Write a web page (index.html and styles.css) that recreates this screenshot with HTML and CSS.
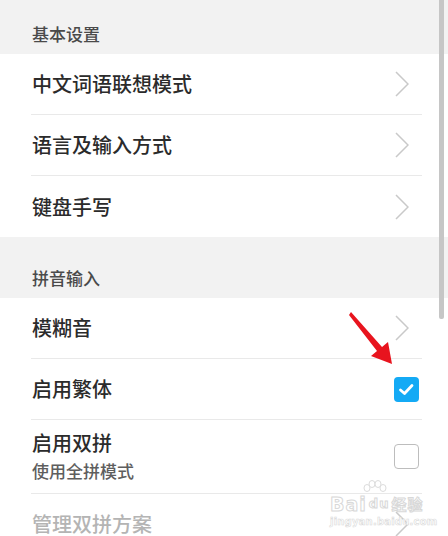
FILE: index.html
```html
<!DOCTYPE html>
<html lang="zh-CN">
<head>
<meta charset="utf-8">
<link rel="stylesheet" href="styles.css">
</head>
<body>
<div class="page">
  <div class="section-head first"><span>基本设置</span></div>
  <div class="row"><div class="row-inner"><span class="label">中文词语联想模式</span><span class="ctrl"><svg class="chev" width="14" height="26" viewBox="0 0 14 26"><path d="M1 1 L13 13 L1 25" fill="none" stroke="#c9c9c9" stroke-width="1.5"/></svg></span></div></div>
  <div class="row"><div class="row-inner"><span class="label">语言及输入方式</span><span class="ctrl"><svg class="chev" width="14" height="26" viewBox="0 0 14 26"><path d="M1 1 L13 13 L1 25" fill="none" stroke="#c9c9c9" stroke-width="1.5"/></svg></span></div></div>
  <div class="row last"><div class="row-inner"><span class="label">键盘手写</span><span class="ctrl"><svg class="chev" width="14" height="26" viewBox="0 0 14 26"><path d="M1 1 L13 13 L1 25" fill="none" stroke="#c9c9c9" stroke-width="1.5"/></svg></span></div></div>
  <div class="section-head"><span>拼音输入</span></div>
  <div class="row"><div class="row-inner"><span class="label">模糊音</span><span class="ctrl"><svg class="chev" width="14" height="26" viewBox="0 0 14 26"><path d="M1 1 L13 13 L1 25" fill="none" stroke="#c9c9c9" stroke-width="1.5"/></svg></span></div></div>
  <div class="row"><div class="row-inner"><span class="label">启用繁体</span><span class="ctrl"><span class="check on"><svg width="25" height="25" viewBox="0 0 25 25"><path d="M6.5 13 L10.5 16.5 L18 8.5" fill="none" stroke="#fff" stroke-width="2.8" stroke-linecap="round" stroke-linejoin="round"/></svg></span></span></div></div>
  <div class="row tall"><div class="row-inner"><span class="texts"><span class="label">启用双拼</span><span class="sub">使用全拼模式</span></span><span class="ctrl"><span class="check"></span></span></div></div>
  <div class="row"><div class="row-inner"><span class="label disabled">管理双拼方案</span><span class="ctrl"><svg class="chev" width="14" height="26" viewBox="0 0 14 26"><path d="M1 1 L13 13 L1 25" fill="none" stroke="#c9c9c9" stroke-width="1.5"/></svg></span></div></div>

  <div class="scrollbar"></div>
  <svg class="arrow" width="448" height="536" viewBox="0 0 448 536"><polygon points="351,312 382,347 388,342 392,364 371,356 377,351 349,315" fill="#e8141e"/></svg>
  <div class="watermark">
    <svg class="paw" width="30" height="20" viewBox="0 0 30 20"><g fill="#fff" stroke="#dcdcdc" stroke-width="1"><ellipse cx="7" cy="8" rx="3" ry="3.5"/><ellipse cx="12" cy="4" rx="3" ry="3.5"/><ellipse cx="18" cy="4" rx="3" ry="3.5"/><ellipse cx="23" cy="8" rx="3" ry="3.5"/></g></svg>
    <div class="wm-top"><span class="wm-bai">Bai</span><span class="wm-du">du</span><span class="wm-jy">经验</span></div>
    <div class="wm-url">jingyan.baidu.com</div>
  </div>
</div>
</body>
</html>
```
FILE: styles.css
```css
* { box-sizing: border-box; }
html, body { margin: 0; padding: 0; }
body {
  width: 448px;
  height: 536px;
  overflow: hidden;
  background: #fff;
  font-family: "Noto Sans CJK SC", "Noto Sans", sans-serif;
}
.page { position: relative; width: 448px; height: 536px; overflow: hidden; }
.section-head {
  height: 61px;
  background: #f2f2f2;
  display: flex;
  align-items: flex-end;
  padding: 0 0 9px 32px;
  font-size: 17px;
  line-height: 22px;
  color: #4a4a4a;
  font-weight: 500;
}
.section-head.first { height: 54px; }
.row { background: #fff; }
.row-inner {
  height: 61px;
  margin-left: 31px;
  margin-right: 26px;
  border-bottom: 1px solid #e9e9e9;
  display: flex;
  align-items: center;
  justify-content: space-between;
  padding-left: 1px;
  padding-right: 3px;
}
.row.last .row-inner { border-bottom: none; }
.row.tall .row-inner { height: 74px; }
.label { font-size: 20px; line-height: 26px; color: #2b2b2b; font-weight: 500; }
.label.disabled { color: #b4b4b4; }
.texts { display: flex; flex-direction: column; }
.texts .label { line-height: 26px; }
.sub { font-size: 17px; line-height: 26px; color: #5e5e5e; margin-top: 2px; font-weight: 500; }
.ctrl { width: 25px; height: 25px; display: flex; align-items: center; }
.chev { display: block; margin-left: 1px; }
.check {
  width: 25px; height: 25px;
  border-radius: 4px;
  border: 1.5px solid #bdbdbd;
  display: block;
}
.check.on { background: #14aaf5; border: none; }
.check svg { display: block; }
.scrollbar {
  position: absolute;
  left: 439px; top: 0;
  width: 5px; height: 319px;
  background: #c6c6c6;
  border-radius: 0 0 2px 2px;
}
.arrow { position: absolute; left: 0; top: 0; }
.watermark {
  position: absolute;
  left: 330px; top: 480px;
  width: 100px;
  color: #fff;
  font-family: "DejaVu Sans", sans-serif;
  font-weight: bold;
}
.paw { position: absolute; left: 30px; top: 0; }
.wm-top { position: absolute; left: 0; top: 14px; display: flex; align-items: center; font-size: 19px; line-height: 20px; -webkit-text-stroke: 1px #d8d8d8; letter-spacing: 1px; }
.wm-du { font-size: 13px; margin: 0 2px; }
.wm-jy { font-family: "Noto Sans CJK SC", sans-serif; font-size: 15px; }
.wm-url { position: absolute; left: 0; top: 36px; font-size: 10px; -webkit-text-stroke: 0.6px #dadada; white-space: nowrap; letter-spacing: 0.2px; }
```
